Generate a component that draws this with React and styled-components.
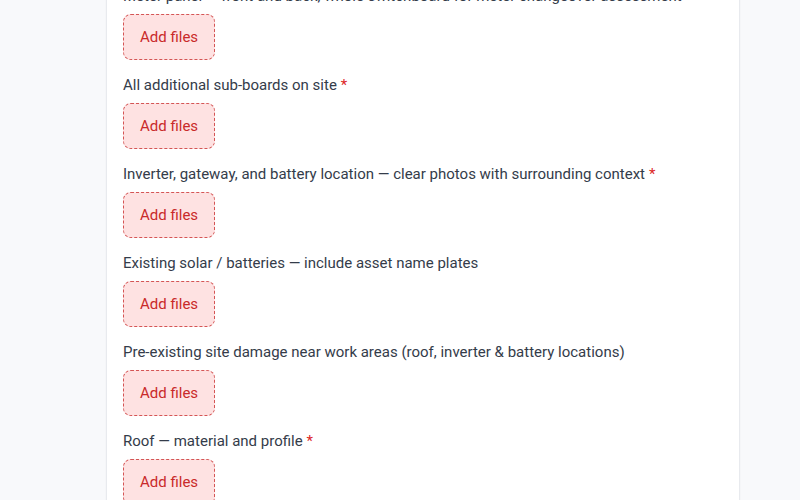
import React from 'react';
import styled, { createGlobalStyle } from 'styled-components';

const GlobalStyle = createGlobalStyle`
	html, body {
		margin: 0;
		padding: 0;
		background: #f8f9fb;
		overflow: hidden;
	}
	body {
		font-family: Roboto, 'Noto Sans', 'Liberation Sans', sans-serif;
	}
	* {
		box-sizing: border-box;
	}
`;

const Page = styled.div`
	height: 500px;
	overflow: hidden;
	padding-left: 106px;
`;

const Card = styled.section`
	width: 634px;
	margin-top: -32px;
	padding: 16px 16px 40px;
	background: #ffffff;
	border: 1px solid #e8eaee;
	box-shadow: 0 1px 2px rgba(15, 23, 42, 0.04);
`;

const Field = styled.div`
	display: flex;
	flex-direction: column;
	align-items: flex-start;
	margin-bottom: 14px;
`;

const Label = styled.label`
	font-size: 15px;
	line-height: 22px;
	color: #343c4a;
	margin-bottom: 7px;
`;

const Required = styled.span`
	color: #dc2626;
	margin-left: 4px;
`;

const AddButton = styled.button`
	font-family: inherit;
	font-size: 15px;
	line-height: 22px;
	height: 46px;
	padding: 0 16px;
	color: #c92a2a;
	background: #fee2e2;
	border: 1px dashed #d45555;
	border-radius: 8px;
	cursor: pointer;
`;

const fields = [
	{ label: 'Meter panel — front and back, whole switchboard for meter changeover assessment', required: true },
	{ label: 'All additional sub-boards on site', required: true },
	{ label: 'Inverter, gateway, and battery location — clear photos with surrounding context', required: true },
	{ label: 'Existing solar / batteries — include asset name plates', required: false },
	{ label: 'Pre-existing site damage near work areas (roof, inverter & battery locations)', required: false },
	{ label: 'Roof — material and profile', required: true },
	{ label: 'Switchboard interior with covers removed', required: true },
];

const App = () => {
	return (
		<>
			<GlobalStyle />
			<Page>
				<Card>
					{fields.map((f, i) => (
						<Field key={i}>
							<Label>
								{f.label}
								{f.required && <Required>*</Required>}
							</Label>
							<AddButton type='button'>Add files</AddButton>
						</Field>
					))}
				</Card>
			</Page>
		</>
	);
};

export default App;
